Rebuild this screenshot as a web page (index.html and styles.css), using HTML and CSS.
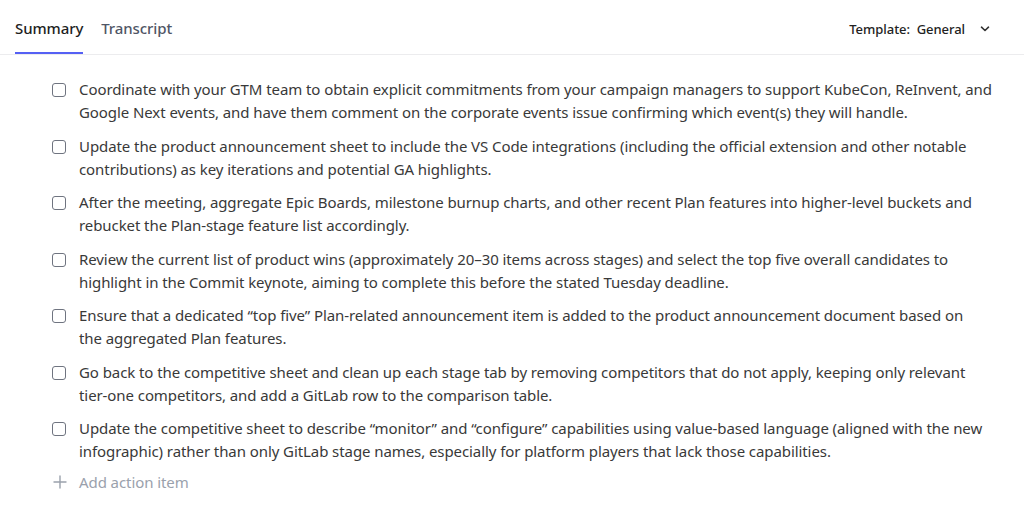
FILE: index.html
```html
<!DOCTYPE html>
<html>
<head>
<meta charset="utf-8">
<link rel="stylesheet" href="styles.css">
</head>
<body>
<div class="page">
  <header class="topbar">
    <nav class="tabs">
      <span class="tab active">Summary</span>
      <span class="tab">Transcript</span>
    </nav>
    <div class="template">
      <span>Template:&nbsp; General</span>
      <svg class="chev" width="10" height="6" viewBox="0 0 10 6"><path d="M1.5 1.2 L5 4.5 L8.5 1.2" fill="none" stroke="#333" stroke-width="1.6" stroke-linecap="round" stroke-linejoin="round"/></svg>
    </div>
  </header>
  <ul class="items">
    <li class="item"><span class="box"></span><p>Coordinate with your GTM team to obtain explicit commitments from your campaign managers to support KubeCon, ReInvent, and Google Next events, and have them comment on the corporate events issue confirming which event(s) they will handle.</p></li>
    <li class="item"><span class="box"></span><p>Update the product announcement sheet to include the VS Code integrations (including the official extension and other notable contributions) as key iterations and potential GA highlights.</p></li>
    <li class="item"><span class="box"></span><p>After the meeting, aggregate Epic Boards, milestone burnup charts, and other recent Plan features into higher-level buckets and rebucket the Plan-stage feature list accordingly.</p></li>
    <li class="item"><span class="box"></span><p>Review the current list of product wins (approximately 20–30 items across stages) and select the top five overall candidates to highlight in the Commit keynote, aiming to complete this before the stated Tuesday deadline.</p></li>
    <li class="item"><span class="box"></span><p>Ensure that a dedicated “top five” Plan-related announcement item is added to the product announcement document based on <span class="nw">the aggregated</span> Plan features.</p></li>
    <li class="item"><span class="box"></span><p>Go back to the competitive sheet and clean up each stage tab by removing competitors that do not apply, keeping only relevant tier-one competitors, and add a GitLab row to the comparison table.</p></li>
    <li class="item"><span class="box"></span><p>Update the competitive sheet to describe “monitor” and “configure” capabilities using value-based language (aligned with the new infographic) rather than only GitLab stage names, especially for platform players that lack those capabilities.</p></li>
  </ul>
  <div class="add">
    <svg width="14" height="14" viewBox="0 0 14 14"><path d="M7 1 V13 M1 7 H13" stroke="#9aa1ac" stroke-width="1.4" stroke-linecap="round"/></svg>
    <span>Add action item</span>
  </div>
</div>
</body>
</html>
```
FILE: styles.css
```css
* { box-sizing: border-box; }
html, body { margin: 0; padding: 0; background: #fff; }
body { font-family: "Noto Sans", "Lato", sans-serif; color: #3a3a3a; }
.page { width: 1024px; }
.topbar {
  display: flex;
  justify-content: space-between;
  align-items: stretch;
  height: 55px;
  border-bottom: 1px solid #ececee;
  padding: 0 34px 0 15px;
}
.tabs { display: flex; gap: 18px; }
.tab {
  font-size: 15px;
  font-weight: 500;
  color: #4f5666;
  padding-top: 18px;
  border-bottom: 2px solid transparent;
  letter-spacing: -0.1px;
}
.tab.active { color: #1e1e1e; border-bottom-color: #5560f4; }
.template {
  display: flex;
  align-items: center;
  gap: 15px;
  font-size: 13px;
  font-weight: 500;
  color: #222;
  padding-top: 3px;
  letter-spacing: -0.05px;
}
.chev { margin-top: 1px; }
.items { list-style: none; margin: 0; padding: 23px 30px 0 52px; }
.item { display: flex; gap: 13px; margin-bottom: 10.5px; }
.item:last-child { margin-bottom: 0; }
.box {
  flex: none;
  width: 14px; height: 14px;
  margin-top: 5px;
  border: 1.5px solid #6f7480;
  border-radius: 3px;
}
.item p { margin: 0; font-size: 15px; line-height: 23px; color: #393939; letter-spacing: -0.08px; }
.nw { white-space: nowrap; }
.add {
  display: flex; align-items: center; gap: 12px;
  padding: 9px 0 0 53px;
  font-size: 15px; color: #9aa1ac; letter-spacing: -0.08px;
}
```
